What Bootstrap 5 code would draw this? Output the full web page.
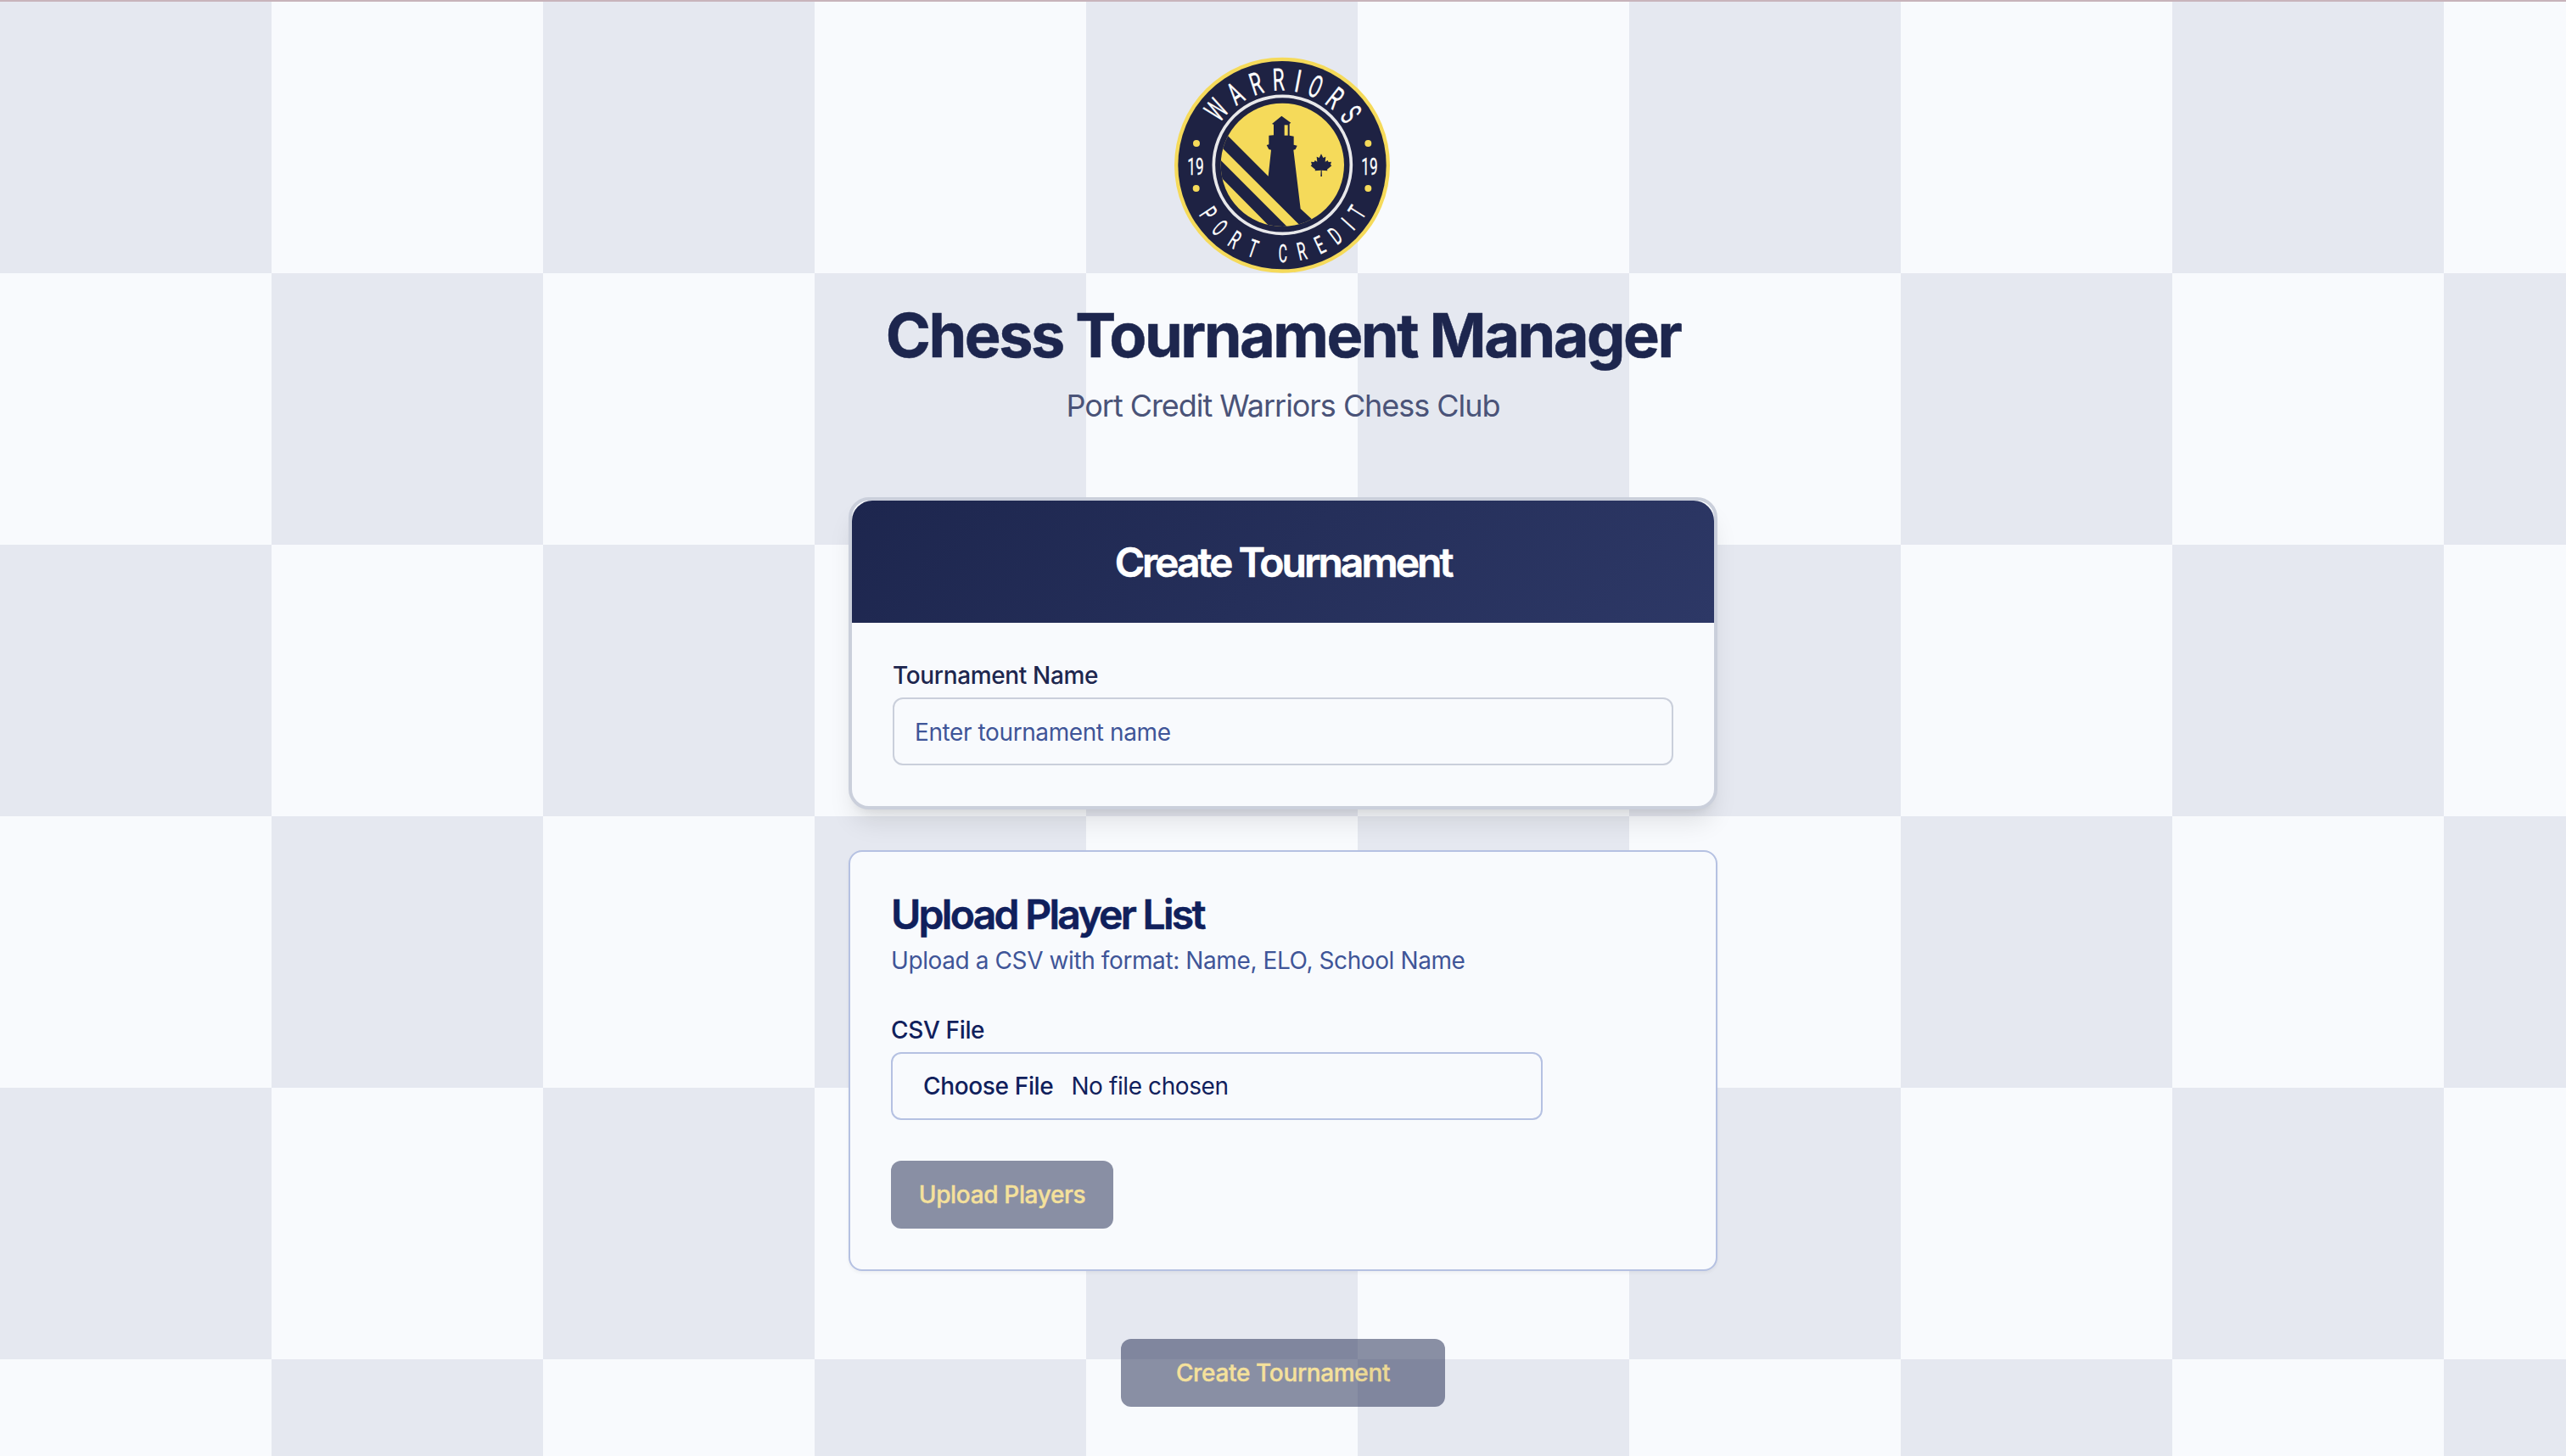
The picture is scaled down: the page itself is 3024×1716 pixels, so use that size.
<!DOCTYPE html>
<html lang="en">
<head>
<meta charset="utf-8">
<meta name="viewport" content="width=device-width, initial-scale=1">
<title>Chess Tournament Manager</title>
<link href="https://cdn.jsdelivr.net/npm/bootstrap@5.3.0/dist/css/bootstrap.min.css" rel="stylesheet">
<style>
  :root { --navy: #1d264e; --ink: #10205c; --paper: #f8fafd; }
  html, body { height: 100%; overflow: hidden; }
  html { background: conic-gradient(var(--paper) 25%, #e5e8f0 0 50%, var(--paper) 0 75%, #e5e8f0 0) 0 2px / 640px 640px; }
  body {
    font-family: Inter, "Liberation Sans", sans-serif;
    font-size: 28px; line-height: 40px; letter-spacing: -.4px; color: var(--navy);
    border-top: 2px solid #c8b4bb;
    background: none;
  }
  .page-col { width: 1024px; padding-top: 64px; }
  .club-logo { width: 256px; height: 256px; letter-spacing: 0; }
  .page-title { font-size: 72px; line-height: 80px; font-weight: 700; letter-spacing: -2.5px; margin: 33px 0 15px; white-space: nowrap; -webkit-text-stroke: .5px; }
  .page-sub { font-size: 36px; line-height: 56px; letter-spacing: -1.05px; color: #4a5378; margin-bottom: 80px; }
  .section-title { font-size: 48px; line-height: 48px; font-weight: 600; letter-spacing: -3px; margin: 0; padding-top: 2px; -webkit-text-stroke: .6px; }
  .create-card { height: 368px; border: 4px solid #cacfdb; border-radius: 24px; background: var(--paper);
    box-shadow: 0 20px 30px -6px rgba(0,0,0,.1), 0 8px 12px -8px rgba(0,0,0,.1); }
  .create-head { height: 144px; border-radius: 24px 24px 0 0; background: linear-gradient(135deg, #1d264e, #2d3866); }
  .create-body { padding: 40px 48px 0; }
  .field-label { font-weight: 500; line-height: 44px; padding-bottom: 4px; display: block; letter-spacing: -.35px; }
  .field-box { height: 80px; font-size: 28px; letter-spacing: -.4px; border: 2px solid #cacfdb; border-radius: 12px; background: var(--paper); padding: 2px 24px 0; color: var(--ink); }
  .field-box::placeholder { color: #3f5598; opacity: 1; }
  .upload-card { height: 496px; margin-top: 48px; padding: 48px; border: 2px solid #b5c1e2; border-radius: 16px; background: var(--paper); color: var(--ink);
    box-shadow: 0 2px 4px rgba(0,0,0,.05); }
  .upload-card .section-title { letter-spacing: -2.7px; }
  .upload-note { color: #3f5598; margin: 10px 0 40px; }
  .file-box { width: 768px; border-color: #b5c1e2; padding: 0 0 0 36px; gap: 21px; }
  .gold-btn { height: 80px; border: 0; border-radius: 12px; font-size: 28px; font-weight: 500; padding: 0; letter-spacing: -.35px; -webkit-text-stroke: .4px;
    --bs-btn-disabled-bg: #1d264e; --bs-btn-disabled-color: #f1c93b; --bs-btn-disabled-opacity: .5; }
  .upload-btn { width: 262px; margin-top: 48px; }
  .create-btn { width: 382px; margin-top: 80px; }
</style>
</head>
<body>
<main class="page-col mx-auto d-flex flex-column align-items-stretch">
  <header class="text-center">
    <svg class="club-logo d-block mx-auto" viewBox="42 30 768 768" role="img" aria-label="Club crest">
      <defs><clipPath id="disc"><circle cx="424" cy="415" r="218"/></clipPath></defs>
      <circle cx="423" cy="416" r="381" fill="#f5da5a"/>
      <circle cx="423" cy="416" r="368" fill="#1e2243"/>
      <circle cx="424" cy="415" r="243" fill="none" stroke="#e8e8ea" stroke-width="11"/>
      <circle cx="424" cy="415" r="218" fill="#f5da5a"/>
      <g clip-path="url(#disc)" fill="#1e2243">
        <path d="M180 261L374 455L384 362L376 360L368 345L376 343V311L393 310V272L387 270L421 242L454 266L449 270V311L464 314V344L476 347L470 360L463 362L488 570L570 646V713L500 643L213 357L170 314Z"/>
        <path d="M170 363L207 400L441 634L480 673L420 674L375 629L212 464L170 422Z"/>
      </g>
      <path fill="#f5da5a" d="M431 274h12v37h-12z"/>
      <path fill="#1e2243" d="M561 376L568 390L577 386L575 404L584 399L587 405L597 404L594 414L598 418L582 431L583 436L563 434L564 456H559L560 434L539 436L540 431L524 418L528 414L525 404L536 405L539 399L547 404L545 386L554 390Z"/>
      <g fill="#f5da5a"><circle cx="120" cy="339" r="12"/><circle cx="119" cy="498" r="12"/><circle cx="727" cy="339" r="12"/><circle cx="727" cy="498" r="12"/></g>
      <g fill="#fff" stroke="#fff" stroke-width="1" font-family="Roboto, sans-serif" text-anchor="middle">
        <g font-size="110">
          <text transform="rotate(-50 423 416) translate(423 151) scale(.6 1)">W</text>
          <text transform="rotate(-33.2 423 416) translate(423 152) scale(.6 1)">A</text>
          <text transform="rotate(-17.8 423 416) translate(423 152) scale(.62 1)">R</text>
          <text transform="rotate(-2.4 423 416) translate(423 152) scale(.62 1)">R</text>
          <text transform="rotate(10.8 423 416) translate(423 152) scale(.7 1)">I</text>
          <text transform="rotate(23.1 423 416) translate(423 152) scale(.56 1)">O</text>
          <text transform="rotate(38.2 423 416) translate(423 152) scale(.62 1)">R</text>
          <text transform="rotate(53.4 423 416) translate(423 152) scale(.58 1)">S</text>
        </g>
        <g font-size="88">
          <text transform="rotate(56.8 423 416) translate(423 759) scale(.58 1)">P</text>
          <text transform="rotate(44.9 423 416) translate(423 759) scale(.53 1)">O</text>
          <text transform="rotate(32.5 423 416) translate(423 759) scale(.58 1)">R</text>
          <text transform="rotate(19.3 423 416) translate(423 759) scale(.58 1)">T</text>
          <text transform="rotate(-.5 423 416) translate(423 759) scale(.54 1)">C</text>
          <text transform="rotate(-12.8 423 416) translate(423 759) scale(.58 1)">R</text>
          <text transform="rotate(-25.3 423 416) translate(423 759) scale(.58 1)">E</text>
          <text transform="rotate(-37 423 416) translate(423 759) scale(.56 1)">D</text>
          <text transform="rotate(-48.3 423 416) translate(423 759) scale(.65 1)">I</text>
          <text transform="rotate(-57.9 423 416) translate(423 759) scale(.58 1)">T</text>
        </g>
        <g font-size="85">
          <text transform="translate(117 450) scale(.61 1)">19</text>
          <text transform="translate(732 450) scale(.61 1)">19</text>
        </g>
      </g>
    </svg>
    <h1 class="page-title">Chess Tournament Manager</h1>
    <p class="page-sub">Port Credit Warriors Chess Club</p>
  </header>

  <section class="create-card">
    <div class="create-head d-flex align-items-center justify-content-center text-white">
      <h2 class="section-title">Create Tournament</h2>
    </div>
    <div class="create-body">
      <label class="field-label" for="tname">Tournament Name</label>
      <input id="tname" class="form-control field-box" type="text" placeholder="Enter tournament name">
    </div>
  </section>

  <section class="upload-card">
    <h2 class="section-title">Upload Player List</h2>
    <p class="upload-note">Upload a CSV with format: Name, ELO, School Name</p>
    <span class="field-label">CSV File</span>
    <label class="form-control field-box file-box d-flex align-items-center">
      <input type="file" class="d-none" accept=".csv">
      <span class="field-label p-0">Choose File</span>
      <span>No file chosen</span>
    </label>
    <button class="btn gold-btn upload-btn" disabled>Upload Players</button>
  </section>

  <button class="btn gold-btn create-btn mx-auto" disabled>Create Tournament</button>
</main>
<script src="https://cdn.jsdelivr.net/npm/bootstrap@5.3.0/dist/js/bootstrap.bundle.min.js"></script>
</body>
</html>
